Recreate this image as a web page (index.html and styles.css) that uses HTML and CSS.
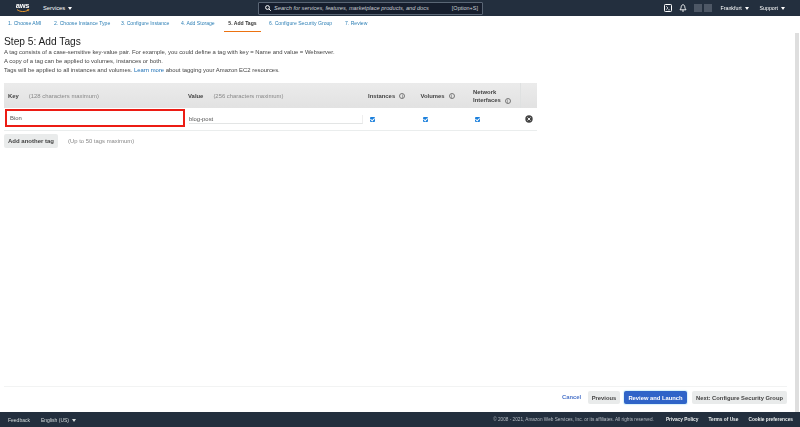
FILE: index.html
```html
<!DOCTYPE html>
<html lang="en">
<head>
<meta charset="utf-8">
<title>Step 5: Add Tags</title>
<link rel="stylesheet" href="styles.css">
</head>
<body>
<div class="page">
  <header class="topnav">
    <div class="logo">
      <span class="logo-text">aws</span>
      <svg class="logo-smile" width="14" height="4" viewBox="0 0 14 4"><path d="M1 .6C4 3 9 3.2 12.4 1" fill="none" stroke="#ec9a2c" stroke-width="1"/><path d="M11 .6l2-.2-.6 1.8" fill="none" stroke="#ec9a2c" stroke-width=".7"/></svg>
    </div>
    <div class="nav-item services">Services <span class="caret"></span></div>
    <div class="search">
      <svg width="6" height="6" viewBox="0 0 6 6"><circle cx="2.500" cy="2.500" r="1.900" fill="none" stroke="#fff" stroke-width="1"/><path d="M4 4l1.800 1.800" stroke="#fff" stroke-width="1"/></svg>
      <span class="search-text">Search for services, features, marketplace products, and docs</span>
      <span class="search-key">[Option+S]</span>
    </div>
    <div class="nav-right">
      <svg class="ico-shell" width="8" height="8" viewBox="0 0 8 8"><rect x=".5" y=".5" width="7" height="7" rx=".8" fill="#232f3e" stroke="#fff" stroke-width="1"/><path d="M2.200 2.200L4 4 2.200 5.600M4.200 5.800h1.600" fill="none" stroke="#fff" stroke-width=".7"/></svg>
      <svg class="ico-bell" width="8" height="8" viewBox="0 0 8 8"><path d="M4 .8C2.600.8 2.200 2 2.200 3.200c0 1-.8 1.800-1.200 2.600h6C6.600 5 5.800 4.200 5.800 3.200 5.800 2 5.400.8 4 .8z" fill="none" stroke="#fff" stroke-width=".9"/><circle cx="4" cy="7" r=".8" fill="#fff"/></svg>
      <div class="account"><span></span><span></span></div>
      <div class="nav-item region">Frankfurt <span class="caret"></span></div>
      <div class="nav-item support">Support <span class="caret"></span></div>
    </div>
  </header>

  <nav class="tabs">
    <a class="tab t1">1. Choose AMI</a>
    <a class="tab t2">2. Choose Instance Type</a>
    <a class="tab t3">3. Configure Instance</a>
    <a class="tab t4">4. Add Storage</a>
    <a class="tab t5 active">5. Add Tags</a>
    <a class="tab t6">6. Configure Security Group</a>
    <a class="tab t7">7. Review</a>
  </nav>

  <div class="body-row">
    <main class="content">
      <h1>Step 5: Add Tags</h1>
      <p>A tag consists of a case-sensitive key-value pair. For example, you could define a tag with key = Name and value = Webserver.</p>
      <p>A copy of a tag can be applied to volumes, instances or both.</p>
      <p>Tags will be applied to all instances and volumes. <a class="link">Learn more</a> about tagging your Amazon EC2 resources.</p>

      <div class="table">
        <div class="row head">
          <div class="c-key"><b>Key</b><span class="hint">(128 characters maximum)</span></div>
          <div class="c-val"><b>Value</b><span class="hint">(256 characters maximum)</span></div>
          <div class="c-chk"><b>Instances</b><i class="info">i</i></div>
          <div class="c-chk"><b>Volumes</b><i class="info">i</i></div>
          <div class="c-chk ni"><b>Network<br>Interfaces</b><i class="info">i</i></div>
          <div class="c-x"></div>
        </div>
        <div class="row data">
          <div class="c-key"><div class="key-input">Bion</div></div>
          <div class="c-val"><div class="val-input">blog-post</div></div>
          <div class="c-chk"><span class="check"></span></div>
          <div class="c-chk"><span class="check"></span></div>
          <div class="c-chk ni"><span class="check"></span></div>
          <div class="c-x">
            <svg width="8" height="8" viewBox="0 0 8 8"><circle cx="4" cy="4" r="3.700" fill="#444"/><path d="M2.500 2.500l3 3M5.500 2.500l-3 3" stroke="#fff" stroke-width=".9"/></svg>
          </div>
        </div>
      </div>

      <div class="add-row">
        <button class="btn add">Add another tag</button>
        <span class="hint">(Up to 50 tags maximum)</span>
      </div>

      <div class="actions">
        <a class="cancel">Cancel</a>
        <button class="btn prev">Previous</button>
        <button class="btn primary">Review and Launch</button>
        <button class="btn next">Next: Configure Security Group</button>
      </div>
    </main>
    <div class="scrollbar"></div>
  </div>

  <footer class="foot">
    <span class="foot-feedback">Feedback</span>
    <span class="foot-lang">English (US) <span class="caret"></span></span>
    <span class="foot-copy">© 2008 - 2021, Amazon Web Services, Inc. or its affiliates. All rights reserved.</span>
    <span class="foot-link first">Privacy Policy</span>
    <span class="foot-link">Terms of Use</span>
    <span class="foot-link">Cookie preferences</span>
  </footer>
</div>
</body>
</html>
```
FILE: styles.css
```css
* { box-sizing: border-box; }
html, body { margin: 0; padding: 0; height: 100%; background: #fff; overflow: hidden; }
.page {
  width: 800px; height: 427px; display: flex; flex-direction: column;
  font-family: "Liberation Sans", Arial, sans-serif; font-size: 5.900px; color: #333;
  filter: blur(.4px);
}
.topnav {
  height: 16px; background: #232f3e; color: #fff; display: flex; align-items: center;
  padding-left: 15px; flex: none; font-size: 5.300px;
}
.logo { width: 15px; height: 14px; display: flex; flex-direction: column; align-items: center; position: relative; }
.logo-text { font-size: 7.500px; font-weight: 700; line-height: 9px; letter-spacing: -.2px; }
.logo-smile { margin-top: -1px; }
.nav-item { white-space: nowrap; }
.services { margin-left: 13px; width: 32px; font-size: 5.800px; }
.caret {
  display: inline-block; width: 0; height: 0; margin-left: 1.500px;
  border-left: 2px solid transparent; border-right: 2px solid transparent; border-top: 3px solid currentColor;
  vertical-align: 0;
}
.search {
  margin-left: 183px; width: 225px; height: 13px; border: 1px solid #5a6675; border-radius: 1px;
  background: #161e2d; display: flex; align-items: center; padding: 0 4px 0 6px; color: #c9ced4;
}
.search-text { margin-left: 3px; font-style: italic; font-size: 5.650px; flex: 1; white-space: nowrap; }
.search-key { font-size: 5.500px; }
.nav-right { margin-left: auto; display: flex; align-items: center; padding-right: 15px; }
.ico-bell { margin-left: 7px; }
.account { margin-left: 7px; width: 18px; height: 8px; display: flex; gap: 2px; opacity: .6; }
.account span { flex: 1; background: #6a7380; }
.region { margin-left: 8px; width: 39px; }
.tabs { height: 16px; flex: none; position: relative; display: flex; align-items: center; }
.tab { position: absolute; top: 0; height: 16px; line-height: 15px; color: #2d7fb5; white-space: nowrap; font-size: 5.100px; }
.t1 { left: 8px; } .t2 { left: 54px; } .t3 { left: 121px; } .t4 { left: 181px; }
.t5 { left: 224px; width: 37px; text-align: center; color: #333; font-weight: 700; border-bottom: 1px solid #ec7211; }
.t6 { left: 269px; } .t7 { left: 345px; }
.body-row { flex: 1; display: flex; min-height: 0; }
.content { flex: 1; padding: 0 8px 0 4px; display: flex; flex-direction: column; min-width: 0; }
h1 { font-size: 10.200px; font-weight: 400; line-height: 12px; margin: 4px 0 0; color: #222; }
p { margin: 0; line-height: 9px; height: 9px; color: #444; white-space: nowrap; }
.link { color: #1b6fb5; }
.table { margin-top: 8px; width: 533px; border-bottom: 1px solid #eaeded; flex: none; }
.row { display: flex; align-items: center; }
.head { height: 25px; background: linear-gradient(#ebebeb, #e2e2e2); color: #444; }
.data { height: 22px; }
.head b { color: #444; }
.hint { color: #888; margin-left: 10px; }
.c-key { width: 181px; flex: none; padding-left: 4px; }
.c-val { width: 183px; flex: none; padding-left: 3px; }
.c-chk { width: 52.500px; flex: none; display: flex; align-items: center; }
.data .c-chk { padding-left: 2px; }
.c-chk.ni { width: 47px; }
.head .c-chk.ni { line-height: 8px; }
.head .ni b { display: block; }
.ni .info { align-self: flex-end; }
.c-x { width: 17px; flex: none; display: flex; justify-content: flex-end; padding-right: 4px; align-self: stretch; align-items: center; }
.head .c-x { border-left: 1px solid #dfe1e1; }
.info {
  width: 6px; height: 6px; border: .5px solid #777; border-radius: 50%; margin-left: 4px; font-style: normal;
  font-size: 4.500px; line-height: 5px; text-align: center; color: #555; flex: none;
}
.key-input {
  width: 180px; margin-left: -3px; height: 18px; border: 2px solid #ec1c14; background: #fff; padding-left: 3px;
  line-height: 14px; color: #555; margin-top: -3px;
}
.val-input { width: 174px; height: 9px; border-bottom: 1px solid #e3e5e5; border-right: 1px solid #eee; line-height: 8px; color: #555; margin-left: 1px; }
.check { width: 5px; height: 5px; border-radius: 1px; background: #1a7fdc; position: relative; display: block; }
.check::after {
  content: ""; position: absolute; left: 1.300px; top: .4px; width: 2px; height: 3px;
  border: solid #fff; border-width: 0 .8px .8px 0; transform: rotate(45deg);
}
.btn {
  font-family: inherit; font-size: 5.800px; font-weight: 700; border: none; border-radius: 2px;
  background: #e9ebeb; color: #444; height: 14px; padding: 0; white-space: nowrap;
}
.add-row { margin-top: 3px; display: flex; align-items: center; }
.add { width: 54px; font-size: 6px; }
.add-row .hint { margin-left: 10px; }
.actions {
  margin-top: auto; height: 26px; border-top: 1px solid #f2f3f3; display: flex; align-items: flex-start; justify-content: flex-end; padding-top: 4px;
}
.cancel { color: #4a73c9; font-weight: 700; font-size: 5.800px; line-height: 13px; margin-right: 7px; }
.btn.prev, .btn.primary, .btn.next { height: 13px; }
.prev { width: 32px; margin-right: 4px; }
.primary { width: 63px; margin-right: 5px; background: #2f64c8; color: #fff; box-shadow: 0 0 1px 1px #d8f2fb; }
.next { width: 95px; }
.scrollbar { width: 4px; margin: 1px 1px 0 0; background: #dedede; height: 393px; flex: none; }
.foot {
  height: 15px; flex: none; background: #232f3e; color: #d5dbdb; display: flex; align-items: center; font-size: 4.800px; padding: 0 7px 0 8px;
}
.foot-feedback { font-size: 5px; }
.foot-lang { margin-left: 11px; font-size: 5px; }
.foot-copy { margin-left: auto; color: #b6bcc3; font-size: 4.700px; }
.foot-link { margin-left: 10px; font-weight: 700; color: #eaeded; }
.foot-link.first { margin-left: 12px; }
```
